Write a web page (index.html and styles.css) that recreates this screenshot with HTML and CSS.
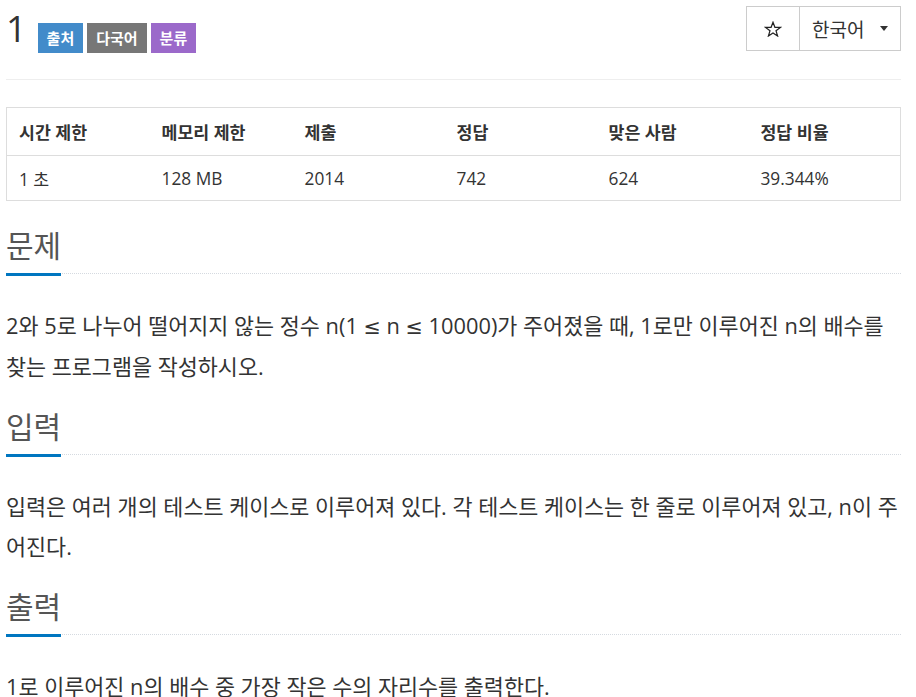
FILE: index.html
```html
<!DOCTYPE html>
<html lang="ko">
<head>
<meta charset="utf-8">
<title>1</title>
<link rel="stylesheet" href="styles.css">
</head>
<body>
<div class="page">
  <header class="page-header">
    <div class="title">
      <h1>1</h1>
      <span class="label label-source">출처</span>
      <span class="label label-lang">다국어</span>
      <span class="label label-tag">분류</span>
    </div>
    <div class="btn-group">
      <button class="btn btn-star" type="button" aria-label="즐겨찾기">
        <svg width="18" height="16" viewBox="0 0 18 16" aria-hidden="true"><path d="M9 1.2 L10.9 6.3 L16.4 6.4 L12 9.7 L13.6 15 L9 11.9 L4.4 15 L6 9.7 L1.6 6.4 L7.1 6.3 Z" fill="none" stroke="#222" stroke-width="1.2" stroke-linejoin="miter"/></svg>
      </button>
      <button class="btn btn-lang" type="button">한국어<span class="caret"></span></button>
    </div>
  </header>

  <table class="info">
    <thead>
      <tr>
        <th class="w16">시간 제한</th>
        <th class="w16">메모리 제한</th>
        <th class="w17">제출</th>
        <th class="w17">정답</th>
        <th class="w17">맞은 사람</th>
        <th class="w17">정답 비율</th>
      </tr>
    </thead>
    <tbody>
      <tr>
        <td>1 초</td>
        <td>128 MB</td>
        <td>2014</td>
        <td>742</td>
        <td>624</td>
        <td>39.344%</td>
      </tr>
    </tbody>
  </table>

  <section class="problem-section">
    <div class="headline"><h2>문제</h2></div>
    <p class="problem-text">2와 5로 나누어 떨어지지 않는 정수 n(1 <span class="rel">≤</span> n <span class="rel">≤</span> 10000)가 주어졌을 때, 1로만 이루어진 n의 배수를 찾는 프로그램을 작성하시오.</p>
  </section>

  <section class="problem-section">
    <div class="headline"><h2>입력</h2></div>
    <p class="problem-text">입력은 여러 개의 테스트 케이스로 이루어져 있다. 각 테스트 케이스는 한 줄로 이루어져 있고, n이 주어진다.</p>
  </section>

  <section class="problem-section">
    <div class="headline"><h2>출력</h2></div>
    <p class="problem-text">1로 이루어진 n의 배수 중 가장 작은 수의 자리수를 출력한다.</p>
  </section>
</div>
</body>
</html>
```

FILE: styles.css
```css
html, body {
  margin: 0;
  padding: 0;
  background: #fff;
}

body {
  font-family: "Open Sans", "Noto Sans CJK KR", sans-serif;
  color: #333;
}

.page {
  width: 895px;
  margin-left: 6px;
}

.page-header {
  display: flex;
  justify-content: space-between;
  align-items: flex-start;
  height: 80px;
  box-sizing: border-box;
  padding-top: 6px;
  border-bottom: 1px solid #eee;
}

.title {
  display: flex;
  align-items: flex-start;
}

.title h1 {
  margin: 3px 0 0 0;
  font-size: 36px;
  line-height: 40px;
  font-weight: 400;
  color: #333;
}

.label {
  display: inline-block;
  margin-top: 17px;
  margin-left: 4px;
  height: 30px;
  line-height: 30px;
  padding: 0 9px;
  font-size: 15px;
  font-weight: 700;
  color: #fff;
}

.label-source {
  margin-left: 11px;
  background: #428bca;
}

.label-lang {
  background: #777;
}

.label-tag {
  background: #9b69ca;
}

.btn-group {
  display: flex;
  height: 45px;
}

.btn {
  display: flex;
  align-items: center;
  justify-content: center;
  height: 45px;
  box-sizing: border-box;
  border: 1px solid #ccc;
  background: #fff;
  color: #333;
  font-family: "Open Sans", "Noto Sans CJK KR", sans-serif;
  font-size: 19px;
  margin: 0;
  padding: 0;
}

.btn-star {
  width: 54px;
}

.btn-lang {
  width: 102px;
  margin-left: -1px;
  justify-content: flex-start;
  padding-left: 12px;
}

.caret {
  display: inline-block;
  width: 0;
  height: 0;
  margin-left: 16px;
  border-top: 5px solid #333;
  border-left: 4.5px solid transparent;
  border-right: 4.5px solid transparent;
}

.info {
  width: 100%;
  margin-top: 27px;
  border-collapse: collapse;
  border: 1px solid #ddd;
  font-size: 17.3px;
}

.info th,
.info td {
  text-align: left;
  padding: 0 12px;
}

.info th {
  height: 47px;
  font-weight: 700;
  border-bottom: 1px solid #ddd;
}

.info td {
  height: 44px;
}

.w16 { width: 16%; }
.w17 { width: 17%; }

.problem-section {
  margin-top: 23px;
}

.problem-section:first-of-type {
  margin-top: 28px;
}

.headline {
  border-bottom: 1px dotted #d5dae0;
}

.headline h2 {
  display: inline-block;
  margin: 0 0 -3px 0;
  padding-bottom: 11px;
  font-size: 30px;
  line-height: 1.1;
  font-weight: 400;
  color: #555;
  border-bottom: 3px solid #0076c0;
}

.problem-text {
  margin: 32px 0 0 0;
  font-size: 21.8px;
  line-height: 40px;
}

.rel {
  font-family: "DejaVu Sans", sans-serif;
  font-size: 0.95em;
}
```
